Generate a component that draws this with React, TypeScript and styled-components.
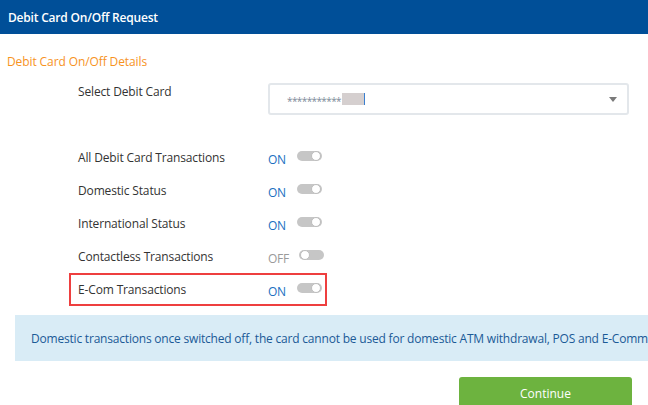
import React from 'react';
import styled, { createGlobalStyle } from 'styled-components';

const GlobalStyle = createGlobalStyle`
	html, body {
		margin: 0;
		padding: 0;
		background: #ffffff;
		overflow: hidden;
	}
	body {
		font-family: 'Open Sans', 'Noto Sans', Arial, sans-serif;
		color: #333333;
	}
`;

interface ToggleRow {
	label: string;
	on: boolean;
	highlight?: boolean;
}

const rows: ToggleRow[] = [
	{ label: 'All Debit Card Transactions', on: true },
	{ label: 'Domestic Status', on: true },
	{ label: 'International Status', on: true },
	{ label: 'Contactless Transactions', on: false },
	{ label: 'E-Com Transactions', on: true, highlight: true },
];

const StyledPage = styled.div`
	width: 648px;
	height: 405px;
	overflow: hidden;
`;
const StyledHeader = styled.div`
	height: 34px;
	background-color: #004f98;
	color: #ffffff;
	font-size: 12px;
	font-weight: 600;
	display: flex;
	align-items: center;
	padding-left: 8px;
	letter-spacing: -0.2px;
`;
const StyledSectionTitle = styled.div`
	color: #f7931e;
	font-size: 12px;
	margin: 20px 0 0 7px;
	line-height: 16px;
	letter-spacing: -0.1px;
`;
const StyledForm = styled.div`
	display: flex;
	flex-direction: column;
	padding-left: 69px;
	margin-top: 13px;
`;
const StyledSelectRow = styled.div`
	display: grid;
	grid-template-columns: 190px 361px;
	padding-left: 9px;
	height: 58px;
`;
const StyledLabel = styled.div`
	font-size: 12px;
	color: #333333;
	letter-spacing: -0.15px;
`;
const StyledSelectLabel = styled(StyledLabel)`
	padding-top: 0;
`;
const StyledSelect = styled.div`
	height: 32px;
	box-sizing: border-box;
	border: 2px solid #e3e7eb;
	border-radius: 3px;
	display: flex;
	align-items: center;
	padding: 0 10px 0 17px;
`;
const StyledMasked = styled.span`
	font-size: 10px;
	color: #7d8a99;
	letter-spacing: -0.6px;
	padding-top: 3px;
`;
const StyledRedacted = styled.span`
	display: inline-block;
	width: 22px;
	height: 12px;
	background-color: #d5cfcf;
	border-right: 1px solid #3a7fd0;
	margin-left: 1px;
`;
const StyledCaret = styled.span`
	margin-left: auto;
	width: 0;
	height: 0;
	border-left: 4px solid transparent;
	border-right: 4px solid transparent;
	border-top: 5px solid #7a7a7a;
`;
const StyledRow = styled.div<{ $highlight?: boolean }>`
	display: grid;
	grid-template-columns: 190px auto;
	align-items: center;
	width: 258px;
	height: 33px;
	box-sizing: border-box;
	border: 2px solid ${(p) => (p.$highlight ? '#ee3f3f' : 'transparent')};
	padding-left: 7px;
`;
const StyledValue = styled.div`
	display: flex;
	align-items: center;
`;
const StyledState = styled.span<{ $on: boolean }>`
	font-size: 12px;
	color: ${(p) => (p.$on ? '#1a6fbf' : '#9a9a9a')};
	width: ${(p) => (p.$on ? '29px' : '31px')};
	padding-top: 3px;
	letter-spacing: -0.3px;
`;
const StyledToggle = styled.span<{ $on: boolean }>`
	width: 25px;
	height: 10px;
	border-radius: 6px;
	background-color: #c6c6c6;
	display: flex;
	justify-content: ${(p) => (p.$on ? 'flex-end' : 'flex-start')};
	align-items: center;
	margin-bottom: 4px;
	box-sizing: border-box;
	padding: 0 1px;
`;
const StyledKnob = styled.span`
	width: 10px;
	height: 10px;
	border-radius: 50%;
	background-color: #ffffff;
	box-sizing: border-box;
	border: 1px solid #bdbdbd;
`;
const StyledInfo = styled.div`
	margin: 9px 0 0 15px;
	height: 46px;
	background-color: #d9ecf6;
	color: #1b5a96;
	font-size: 12px;
	display: flex;
	align-items: center;
	padding-left: 16px;
	white-space: nowrap;
	overflow: hidden;
	letter-spacing: -0.2px;
`;
const StyledFooter = styled.div`
	display: flex;
	justify-content: flex-end;
	padding-right: 16px;
	margin-top: 16px;
`;
const StyledButton = styled.button`
	width: 173px;
	height: 32px;
	border: none;
	border-radius: 3px 3px 0 0;
	background-color: #6db33f;
	color: #ffffff;
	font-family: inherit;
	font-size: 12px;
	display: flex;
	justify-content: center;
	padding: 8px 0 0;
	box-sizing: border-box;
`;

const App: React.FC = () => {
	return (
		<StyledPage>
			<GlobalStyle />
			<StyledHeader>Debit Card On/Off Request</StyledHeader>
			<StyledSectionTitle>Debit Card On/Off Details</StyledSectionTitle>
			<StyledForm>
				<StyledSelectRow>
					<StyledSelectLabel>Select Debit Card</StyledSelectLabel>
					<StyledSelect>
						<StyledMasked>***********</StyledMasked>
						<StyledRedacted />
						<StyledCaret />
					</StyledSelect>
				</StyledSelectRow>
				{rows.map((row) => (
					<StyledRow key={row.label} $highlight={row.highlight}>
						<StyledLabel>{row.label}</StyledLabel>
						<StyledValue>
							<StyledState $on={row.on}>{row.on ? 'ON' : 'OFF'}</StyledState>
							<StyledToggle $on={row.on}>
								<StyledKnob />
							</StyledToggle>
						</StyledValue>
					</StyledRow>
				))}
			</StyledForm>
			<StyledInfo>
				Domestic transactions once switched off, the card cannot be used for
				domestic ATM withdrawal, POS and E-Commerce transactions.
			</StyledInfo>
			<StyledFooter>
				<StyledButton>Continue</StyledButton>
			</StyledFooter>
		</StyledPage>
	);
};

export default App;
